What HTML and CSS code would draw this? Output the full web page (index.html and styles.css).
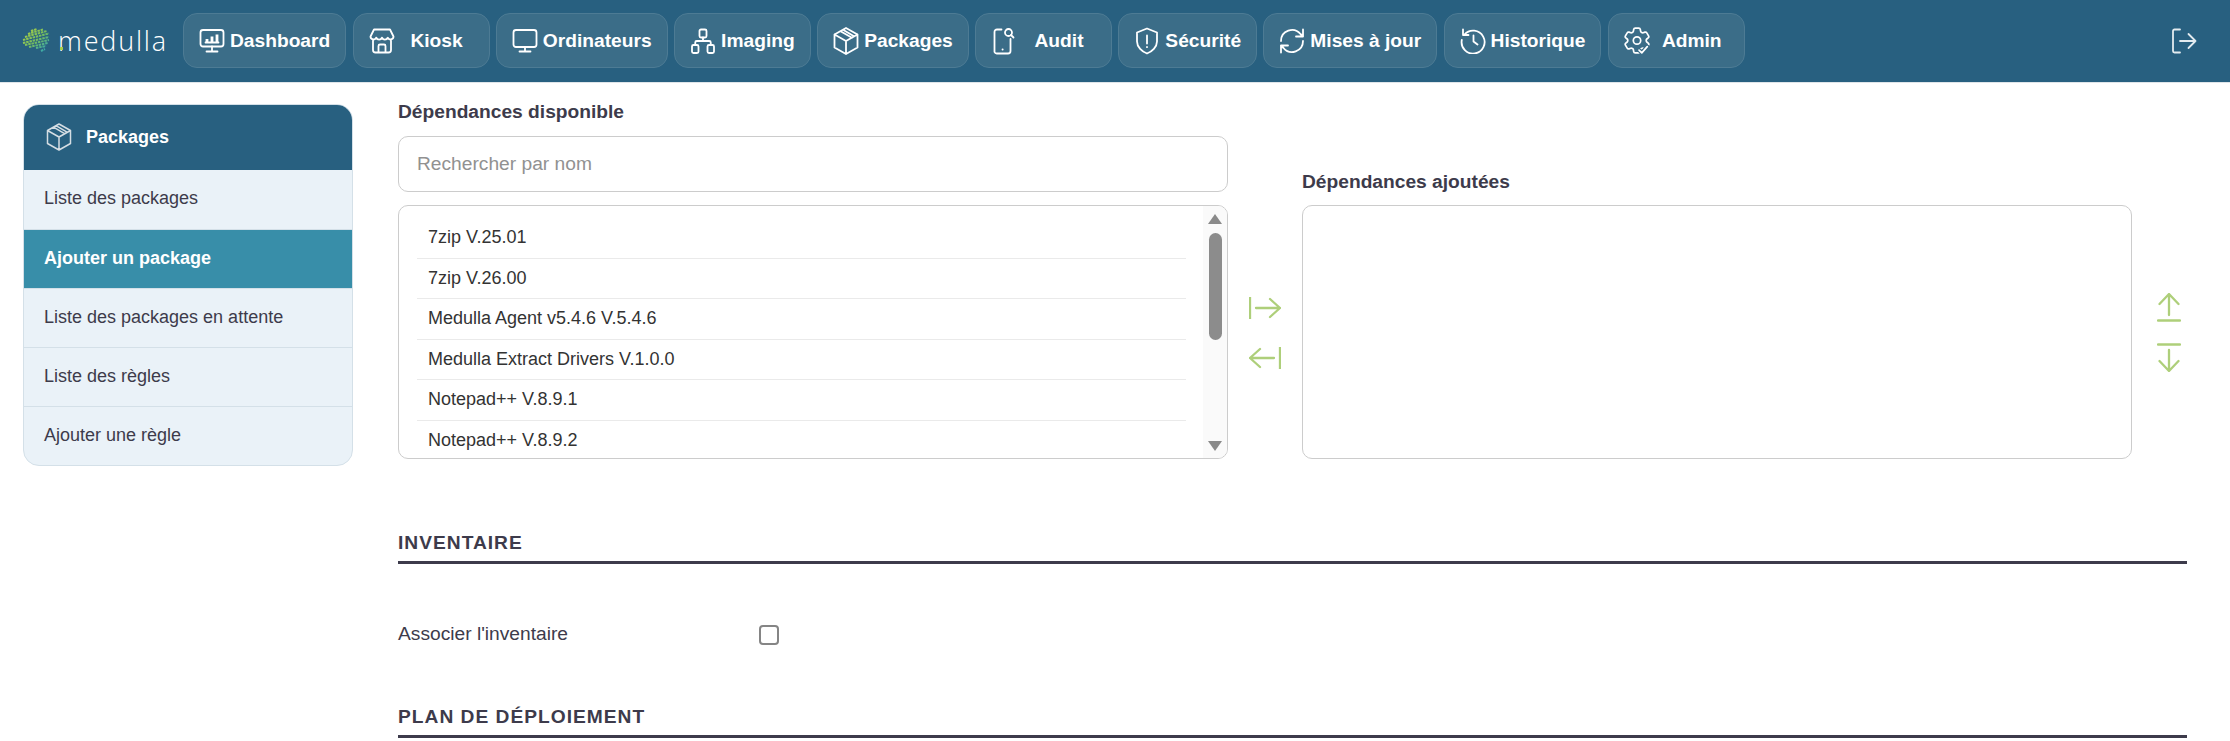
FILE: index.html
```html
<!DOCTYPE html>
<html lang="fr">
<head>
<meta charset="utf-8">
<title>Medulla - Ajouter un package</title>
<link rel="stylesheet" href="styles.css">
</head>
<body>
<header class="topbar">
  <a class="logo" href="#">
    <svg class="logo-mark" viewBox="0 0 28 24" fill="none" stroke-width="2" stroke-dasharray="2.500 .8">
      <defs><linearGradient id="brain" x1="0" y1="0" x2="1" y2="1"><stop offset="0" stop-color="#b5d33d"/><stop offset=".55" stop-color="#6fbb63"/><stop offset="1" stop-color="#2aa3c0"/></linearGradient></defs>
      <g stroke="url(#brain)">
        <path d="M9 3 15 1M6 6 21 1.500M3 9 25 3M1 12 27 5.500M1 15 27 9M3 17 27 12M7 19 26 15M14 20 24 18M19 23 23 21"/>
      </g>
    </svg>
    <span class="logo-text">medulla</span>
  </a>
  <nav class="nav">
    <a class="nav-btn" href="#"><svg class="ico" viewBox="0 0 26 26"><rect x="1.500" y="2" width="23" height="16.500" rx="2.500"/><path d="M13 18.500V23M7.500 23.500h11M6.500 14.500h13" /><path class="fat" d="M8 14v-3M13 14V8.500M18 14V6.500"/></svg><span>Dashboard</span></a>
    <a class="nav-btn" href="#"><svg class="ico" viewBox="0 0 26 26"><path d="M5 1.500h16l3.500 7a3 3 0 0 1-5.750 1.200 3.100 3.100 0 0 1-5.750 0 3.100 3.100 0 0 1-5.750 0A3 3 0 0 1 1.500 8.500zM4 12.500V22a2.500 2.500 0 0 0 2.500 2.500h13A2.500 2.500 0 0 0 22 22v-9.500M9.500 24.500V18a1.500 1.500 0 0 1 1.500-1.500h4a1.500 1.500 0 0 1 1.500 1.500v6.500"/></svg><span>Kiosk</span></a>
    <a class="nav-btn" href="#"><svg class="ico" viewBox="0 0 26 26"><rect x="1.500" y="2" width="23" height="17" rx="2.500"/><path d="M13 19v4.500M7.500 23.500h11"/></svg><span>Ordinateurs</span></a>
    <a class="nav-btn" href="#"><svg class="ico" viewBox="0 0 26 26"><rect x="9.500" y="1.500" width="7" height="8" rx="1.500"/><rect x="2" y="17" width="6.500" height="8" rx="1.500"/><rect x="17.500" y="17" width="6.500" height="8" rx="1.500"/><path d="M13 9.500V13M5.250 17v-2.500a1.500 1.500 0 0 1 1.500-1.500h12.500a1.500 1.500 0 0 1 1.500 1.500V17"/></svg><span>Imaging</span></a>
    <a class="nav-btn" href="#"><svg class="ico ico-tall" viewBox="0 0 26 28"><path d="M13 1 24.500 7.500V20.500L13 27 1.500 20.500V7.500zM1.500 7.500 13 14l11.500-6.500M13 14V27M7.500 4.200 19 10.800M10 2.700l11 6.500"/></svg><span>Packages</span></a>
    <a class="nav-btn" href="#"><svg class="ico ico-tall" viewBox="0 0 26 28"><path d="M10.500 2.500H6a2.500 2.500 0 0 0-2.500 2.500v20A2.500 2.500 0 0 0 6 26.500h11a2.500 2.500 0 0 0 2.500-2.500V12"/><circle cx="17.500" cy="5.500" r="3.500"/><path d="M20 8l2.500 2.500M11.500 22.500h.2"/></svg><span>Audit</span></a>
    <a class="nav-btn" href="#"><svg class="ico ico-tall" viewBox="0 0 26 28"><path d="M13 1.500 23 5.500v9c0 5.500-5 10-10 12-5-2-10-6.500-10-12v-9zM13 8.500v8M13 20v.2"/></svg><span>Sécurité</span></a>
    <a class="nav-btn" href="#"><svg class="ico" viewBox="0 0 26 26"><path d="M2 13A11 11 0 0 1 21.500 6L24 8.500M24 1.500v7h-7M24 13A11 11 0 0 1 4.500 20L2 17.500M2 24.500v-7h7"/></svg><span>Mises à jour</span></a>
    <a class="nav-btn" href="#"><svg class="ico" viewBox="0 0 26 26"><path d="M4.500 6.500A11.500 11.500 0 1 1 1.800 12M3 1.500v5.500h5.500M13.500 7.500v6l4 3"/></svg><span>Historique</span></a>
    <a class="nav-btn" href="#"><svg class="ico ico-gear" viewBox="2.500 2.500 19 19"><path d="M9.594 3.940c.09-.542.56-.94 1.110-.94h2.593c.55 0 1.020.398 1.110.94l.213 1.281c.063.374.313.686.645.870.074.04.147.083.22.127.325.196.72.257 1.075.124l1.217-.456a1.125 1.125 0 0 1 1.370.49l1.296 2.247a1.125 1.125 0 0 1-.26 1.431l-1.003.827c-.293.241-.438.613-.43.992a7.723 7.723 0 0 1 0 .255c-.008.378.137.75.43.991l1.004.827c.424.35.534.955.26 1.430l-1.298 2.247a1.125 1.125 0 0 1-1.369.491l-1.217-.456c-.355-.133-.75-.072-1.076.124a6.470 6.470 0 0 1-.22.128c-.331.183-.581.495-.644.869l-.213 1.281c-.09.543-.56.94-1.110.94h-2.594c-.55 0-1.019-.398-1.110-.94l-.213-1.281c-.062-.374-.312-.686-.644-.87a6.520 6.520 0 0 1-.22-.127c-.325-.196-.72-.257-1.076-.124l-1.217.456a1.125 1.125 0 0 1-1.369-.49l-1.297-2.247a1.125 1.125 0 0 1 .26-1.431l1.004-.827c.292-.24.437-.613.43-.991a6.932 6.932 0 0 1 0-.255c.007-.38-.138-.751-.43-.992l-1.004-.827a1.125 1.125 0 0 1-.26-1.430l1.297-2.247a1.125 1.125 0 0 1 1.370-.491l1.216.456c.356.133.751.072 1.076-.124.072-.044.146-.086.22-.128.332-.183.582-.495.644-.869l.214-1.280Z"/><circle cx="12" cy="12" r="2.700"/><path class="gear-gap" d="M13.500 19l2 2 4-4.500"/><path d="M13.500 19l2 2 4-4.500"/></svg><span>Admin</span></a>
  </nav>
  <a class="logout" href="#" aria-label="Déconnexion"><svg class="ico" viewBox="0 0 26 26"><path d="M9 1.500H3.500A1.500 1.500 0 0 0 2 3v20a1.500 1.500 0 0 0 1.500 1.500H9M9 13h15.500M17.500 6l7 7-7 7"/></svg></a>
</header>

<div class="page">
  <aside class="side">
    <div class="side-head"><svg class="side-ico" viewBox="0 0 26 28"><path d="M13 1 24.500 7.500V20.500L13 27 1.500 20.500V7.500zM1.500 7.500 13 14l11.500-6.500M13 14V27M7.500 4.200 19 10.800M10 2.700l11 6.500"/></svg><span>Packages</span></div>
    <a class="side-item" href="#">Liste des packages</a>
    <a class="side-item active" href="#">Ajouter un package</a>
    <a class="side-item" href="#">Liste des packages en attente</a>
    <a class="side-item" href="#">Liste des règles</a>
    <a class="side-item" href="#">Ajouter une règle</a>
  </aside>

  <main class="content">
    <div class="deps">
      <div class="dep-col">
        <label class="field-label">Dépendances disponible</label>
        <input class="search" type="text" placeholder="Rechercher par nom">
        <div class="list-box">
          <ul class="dep-list">
            <li>7zip V.25.01</li>
            <li>7zip V.26.00</li>
            <li>Medulla Agent v5.4.6 V.5.4.6</li>
            <li>Medulla Extract Drivers V.1.0.0</li>
            <li>Notepad++ V.8.9.1</li>
            <li>Notepad++ V.8.9.2</li>
          </ul>
          <div class="scrollbar">
            <span class="sb-up"></span>
            <span class="sb-thumb"></span>
            <span class="sb-down"></span>
          </div>
        </div>
      </div>
      <div class="move-col">
        <svg class="arrow-h" viewBox="0 0 32 22"><path d="M1 0v22M7 11h24M21 2l10 9-10 9"/></svg>
        <svg class="arrow-h" viewBox="0 0 32 22"><path d="M31 0v22M25 11H1M11 2 1 11l10 9"/></svg>
      </div>
      <div class="dep-col">
        <label class="field-label">Dépendances ajoutées</label>
        <div class="added-box"></div>
      </div>
      <div class="order-col">
        <svg class="arrow-v" viewBox="0 0 24 29"><path d="M12 1v21M2.500 11 12 1l9.500 10M1 27.500h22"/></svg>
        <svg class="arrow-v" viewBox="0 0 24 29"><path d="M1 1.500h22M12 7v21M2.500 18l9.500 10 9.500-10"/></svg>
      </div>
    </div>

    <h2 class="section">Inventaire</h2>
    <div class="check-row">
      <label class="check-label">Associer l'inventaire</label>
      <span class="check"></span>
    </div>
    <h2 class="section plan">Plan de déploiement</h2>
  </main>
</div>
</body>
</html>
```

FILE: styles.css
```css
* { box-sizing: border-box; }
html, body { margin: 0; height: 741px; overflow: hidden; background: #fff; }
body { font-family: "Liberation Sans", Arial, sans-serif; color: #3d3b4b; }
a { color: inherit; text-decoration: none; }

.topbar {
  height: 83px;
  background: #286080;
  border-bottom: 1px solid #dfe5e9;
  display: flex;
  align-items: flex-start;
  padding: 13px 33px 0 22px;
}
.logo { width: 161px; height: 55px; display: flex; align-items: center; gap: 8px; flex: none; }
.logo-mark { width: 28px; height: 24px; flex: none; margin-top: -1px; }
.logo-text {
  position: relative;
  font-family: "Open Sans", sans-serif;
  font-weight: 300;
  font-size: 27px;
  letter-spacing: 1.800px;
  color: #fff;
  line-height: 1;
}
.logo-text::before {
  content: "";
  position: absolute;
  left: 2px;
  top: 20px;
  width: 3px;
  height: 3px;
  background: #a6cf4a;
}
.nav { display: flex; gap: 6.300px; }
.nav-btn {
  height: 55px;
  min-width: 137px;
  padding: 0 15px;
  display: flex;
  align-items: center;
  gap: 5px;
  background: #3b6d88;
  border: 1px solid #4d7b94;
  border-radius: 14px;
  color: #fff;
  font-weight: 700;
  font-size: 19.200px;
}
.nav-btn span { flex: 1; text-align: center; white-space: nowrap; }
.ico {
  width: 26px;
  height: 26px;
  flex: none;
  fill: none;
  stroke: #fff;
  stroke-width: 1.800;
  stroke-linecap: round;
  stroke-linejoin: round;
}
.ico-tall { height: 28px; }
.ico-gear { stroke-width: 1.250; height: 27px; }
.gear-gap { stroke: #3b6d88; stroke-width: 3; }
.ico .fat { stroke-width: 2.800; stroke-linecap: butt; }
.logout { margin-left: auto; margin-top: 15px; height: 26px; }
.logout .ico { stroke: #e3ebef; }

.page { display: flex; align-items: flex-start; }
.side {
  width: 330px;
  margin: 21px 45px 0 23px;
  flex: none;
  background: #eaf2f8;
  border: 1px solid #d4e0e8;
  border-radius: 16px;
  overflow: hidden;
}
.side-head {
  height: 66px;
  margin: -1px -1px 0;
  background: #286080;
  display: flex;
  align-items: center;
  gap: 14px;
  padding-left: 23px;
  color: #fff;
  font-weight: 700;
  font-size: 18px;
}
.side-ico {
  width: 26px;
  height: 28px;
  fill: none;
  stroke: #d4dde3;
  stroke-width: 1.500;
  stroke-linejoin: round;
}
.side-item {
  display: flex;
  align-items: center;
  height: 59px;
  padding: 0 0 2px 20px;
  font-size: 18px;
  border-top: 1px solid #d4e0e8;
}
.side-item:nth-of-type(1) { border-top: 0; }
.side-item.active { background: #388ea9; color: #fff; font-weight: 700; }

.content { width: 1789px; flex: none; padding-top: 17px; }
.deps {
  display: grid;
  grid-template-columns: 830px 74px 830px 55px;
  align-items: end;
}
.dep-col { display: flex; flex-direction: column; }
.field-label { display: block; height: 24px; line-height: 24px; font-size: 19.200px; font-weight: 700; }
.search {
  height: 56px;
  margin-top: 12px;
  padding: 0 18px;
  border: 1px solid #ccc;
  border-radius: 10px;
  font: 19.200px "Liberation Sans", Arial, sans-serif;
  color: #333;
  outline: 0;
}
.search::placeholder { color: #919191; opacity: 1; }
.list-box {
  height: 254px;
  margin-top: 13px;
  border: 1px solid #ccc;
  border-radius: 10px;
  overflow: hidden;
  display: flex;
}
.dep-list {
  flex: 1;
  list-style: none;
  margin: 0;
  padding: 12px 17px 0 18px;
  height: 252px;
  overflow: hidden;
  font-size: 18px;
  color: #333;
}
.dep-list li {
  height: 40.500px;
  line-height: 38px;
  padding-left: 11px;
  border-bottom: 1px solid #eaeaea;
}
.dep-list li:last-child { border-bottom: 0; }
.scrollbar {
  width: 24px;
  flex: none;
  background: #fafafa;
  display: flex;
  flex-direction: column;
  align-items: center;
  position: relative;
}
.sb-up, .sb-down { width: 0; height: 0; border: 7.500px solid transparent; position: absolute; }
.sb-up { top: 0; border-top: 0; border-bottom: 10px solid #8a8a8a; margin-top: 8px; }
.sb-down { bottom: 0; border-bottom: 0; border-top: 10px solid #8a8a8a; margin-bottom: 7px; }
.sb-thumb { position: absolute; top: 27px; width: 13px; height: 107px; background: #8c8c8c; border-radius: 7px; }
.added-box { height: 254px; margin-top: 11px; border: 1px solid #ccc; border-radius: 10px; }
.move-col {
  height: 254px;
  display: flex;
  flex-direction: column;
  align-items: center;
  gap: 28px;
  padding: 92px 0 0 0;
}
.arrow-h { width: 32px; height: 22px; display: block; }
.arrow-v { width: 24px; height: 29px; display: block; }
.arrow-h, .arrow-v {
  fill: none;
  stroke: #aecf7a;
  stroke-width: 2.300;
  stroke-linecap: round;
  stroke-linejoin: round;
}
.order-col {
  height: 254px;
  display: flex;
  flex-direction: column;
  align-items: flex-end;
  gap: 21px;
  padding: 88px 6px 0 0;
}
.section {
  margin: 72px 0 0;
  height: 32.500px;
  border-bottom: 3px solid #3d3b4b;
  font-size: 19.200px;
  font-weight: 700;
  line-height: 24px;
  letter-spacing: 1px;
  text-transform: uppercase;
}
.check-row {
  display: flex;
  align-items: center;
  height: 20px;
  margin-top: 61.500px;
}
.check-label { width: 361px; font-size: 19.200px; margin-top: -2px; }
.check { width: 20px; height: 20px; border: 2px solid #858585; border-radius: 4px; background: #fff; }
.section.plan { margin-top: 60px; }
```
